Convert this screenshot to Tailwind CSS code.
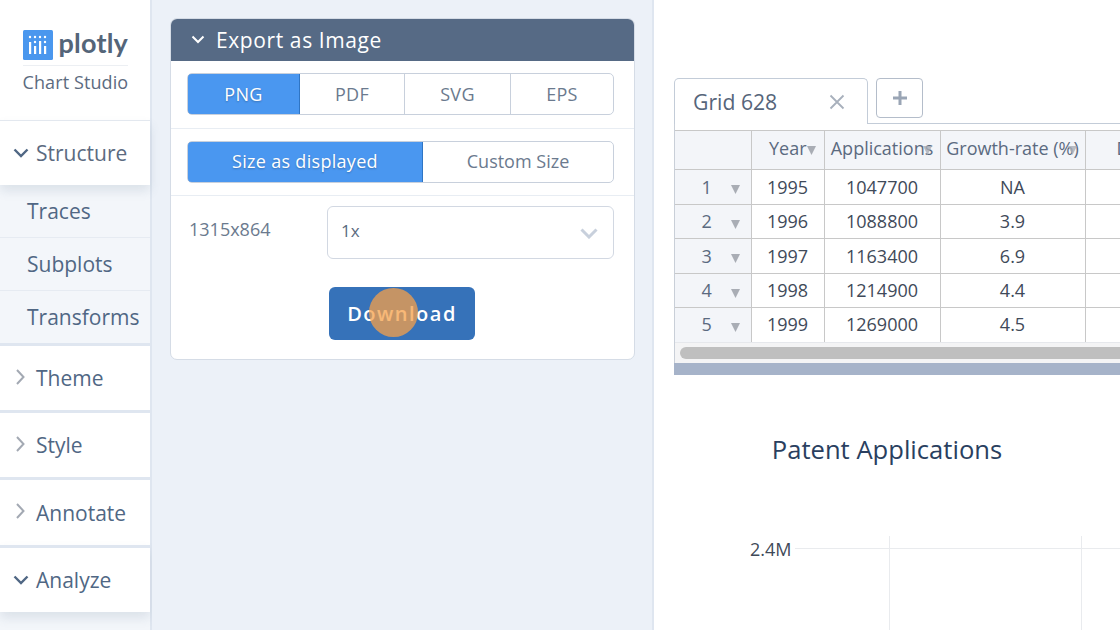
<!DOCTYPE html>
<html lang="en">
<head>
  <meta charset="UTF-8" />
  <title>Chart Studio</title>
  <script src="https://cdn.jsdelivr.net/npm/@tailwindcss/browser@4"></script>
</head>
<body class="bg-white">
  <div class="relative flex w-[1120px] h-[630px] overflow-hidden bg-white text-[#506784] font-['Open_Sans',sans-serif]">

    <!-- sidebar -->
    <aside class="w-[152px] h-full shrink-0 bg-[#f3f6fa] border-r-2 border-[#dfe6f0] flex flex-col">
      <div class="h-[120px] shrink-0 bg-white flex flex-col items-center pt-[30px]">
        <div class="flex items-center gap-[6px] w-[105px] h-[30px]">
          <svg width="30" height="30" viewBox="0 0 30 30" class="shrink-0">
            <rect width="30" height="30" rx="1.5" fill="#4a97ee"/>
            <g fill="#fff">
              <circle cx="7" cy="7" r="1.2"/><circle cx="12" cy="7" r="1.2"/><circle cx="17" cy="7" r="1.2"/><circle cx="22" cy="7" r="1.2"/>
              <circle cx="12" cy="12" r="1.2"/><circle cx="22" cy="12" r="1.2"/>
              <rect x="6" y="12" width="2.2" height="12"/><rect x="11" y="16" width="2.2" height="8"/><rect x="16" y="11" width="2.2" height="13"/><rect x="21" y="16" width="2.2" height="8"/>
            </g>
          </svg>
          <span class="text-[27px] leading-[30px] font-bold text-[#546579] tracking-[0.2px] font-['Lato',sans-serif] -mt-[5px]">plotly</span>
        </div>
        <div class="w-[105px] mt-[5px] border-t border-[#eceff3] pt-[3px] text-[18px] leading-[26px] tracking-[0.1px] text-[#5c6b80] text-center whitespace-nowrap">Chart Studio</div>
      </div>

      <div class="h-[65px] shrink-0 bg-white border-t border-[#e3e8ef] shadow-[0_6px_10px_rgba(80,103,132,0.14)] flex items-center pl-[13px] gap-[7px] relative">
        <svg width="16" height="10" viewBox="0 0 16 10" fill="none" stroke="#506784" stroke-width="2.4"><path d="M1.5 1.5 8 8l6.5-6.5"/></svg>
        <span class="text-[21px] text-[#5b6a80] mt-[2px]">Structure</span>
      </div>
      <div class="h-[53px] shrink-0 border-b border-[#e6ebf2] flex items-center pl-[27px] pt-[2px] text-[21px]">Traces</div>
      <div class="h-[53px] shrink-0 border-b border-[#e6ebf2] flex items-center pl-[27px] pt-[2px] text-[21px]">Subplots</div>
      <div class="h-[52px] shrink-0 flex items-center pl-[27px] pt-[2px] text-[21px]">Transforms</div>

      <div class="h-[67px] shrink-0 bg-white border-t-[3px] border-[#dfe6f0] flex items-center pl-[16px] gap-[11px]">
        <svg width="9" height="16" viewBox="0 0 9 16" fill="none" stroke="#a3a9b3" stroke-width="2" class="-mt-[3px]"><path d="M1 1l6.5 7L1 15"/></svg>
        <span class="text-[21px] mt-[2px]">Theme</span>
      </div>
      <div class="h-[67px] shrink-0 bg-white border-t-[3px] border-[#dfe6f0] flex items-center pl-[16px] gap-[11px]">
        <svg width="9" height="16" viewBox="0 0 9 16" fill="none" stroke="#a3a9b3" stroke-width="2" class="-mt-[3px]"><path d="M1 1l6.5 7L1 15"/></svg>
        <span class="text-[21px] mt-[2px]">Style</span>
      </div>
      <div class="h-[68px] shrink-0 bg-white border-t-[3px] border-[#dfe6f0] flex items-center pl-[16px] gap-[11px]">
        <svg width="9" height="16" viewBox="0 0 9 16" fill="none" stroke="#a3a9b3" stroke-width="2" class="-mt-[3px]"><path d="M1 1l6.5 7L1 15"/></svg>
        <span class="text-[21px] mt-[2px]">Annotate</span>
      </div>
      <div class="h-[67px] shrink-0 bg-white border-t-[3px] border-[#dfe6f0] shadow-[0_6px_10px_rgba(80,103,132,0.14)] flex items-center pl-[13px] gap-[7px]">
        <svg width="16" height="10" viewBox="0 0 16 10" fill="none" stroke="#506784" stroke-width="2.4"><path d="M1.5 1.5 8 8l6.5-6.5"/></svg>
        <span class="text-[21px] mt-[2px]">Analyze</span>
      </div>
    </aside>

    <!-- export panel -->
    <section class="w-[502px] h-full shrink-0 bg-[#ecf1f8] border-r-2 border-[#dfe6f0] pt-[18px] pl-[18px]">
      <div class="w-[465px] h-[342px] bg-white rounded-[7px] border border-[#d5dce6] overflow-hidden">
        <div class="h-[43px] -mt-px -mx-px bg-[#566a85] flex items-center pl-[21px] gap-[11px] text-white">
          <svg width="14" height="9" viewBox="0 0 14 9" fill="none" stroke="#fff" stroke-width="2"><path d="M1.5 1.5 7 7l5.5-5.5"/></svg>
          <span class="text-[21px] tracking-[0.6px] mt-[3px]">Export as Image</span>
        </div>
        <div class="h-[68px] border-b border-[#e8edf3] flex items-start pt-[12px] pl-[16px]">
          <div class="flex h-[42px] w-[427px] rounded-[5px] border border-[#c8d0dc] overflow-hidden text-[18px] text-[#6b7a8e] tracking-[0.3px]">
            <div class="w-[113px] -ml-px bg-[#4a97f0] border border-[#2f75c4] -my-px rounded-l-[5px] text-white flex items-center justify-center [text-shadow:0_1px_2px_rgba(0,0,0,0.25)]">PNG</div>
            <div class="w-[105px] border-r border-[#c8d0dc] flex items-center justify-center">PDF</div>
            <div class="w-[106px] border-r border-[#c8d0dc] flex items-center justify-center">SVG</div>
            <div class="flex-1 flex items-center justify-center">EPS</div>
          </div>
        </div>
        <div class="h-[67px] border-b border-[#e8edf3] flex items-center pl-[16px]">
          <div class="flex h-[42px] w-[427px] rounded-[5px] border border-[#c8d0dc] overflow-hidden text-[18px] text-[#6b7a8e]">
            <div class="w-[236px] -ml-px bg-[#4a97f0] border border-[#2f75c4] -my-px pb-[2px] rounded-l-[5px] text-white flex items-center justify-center tracking-[0.3px] [text-shadow:0_1px_2px_rgba(0,0,0,0.25)]">Size as displayed</div>
            <div class="flex-1 flex items-center justify-center pb-[2px]">Custom Size</div>
          </div>
        </div>
        <div class="flex items-start pt-[10px] pl-[18px]">
          <span class="w-[138px] mt-[11px] text-[18px] leading-[24px] text-[#6b7a8e]">1315x864</span>
          <div class="w-[287px] h-[53px] rounded-[6px] border-[1.5px] border-[#d2d8e2] flex items-center justify-between pl-[13px] pr-[15px] text-[17px] text-[#5b6a80]">
            <span class="-mt-[3px]">1x</span>
            <svg width="18" height="11" viewBox="0 0 18 11" fill="none" stroke="#c8d0dc" stroke-width="3" class="mt-[1px]"><path d="M1.5 1.5 9 9l7.5-7.5"/></svg>
          </div>
        </div>
        <div class="mt-[28px] ml-[158px] w-[146px] h-[53px] rounded-[6px] bg-[#3672b9] text-white flex items-center justify-center text-[20px] font-[550] tracking-[1.5px]">Download</div>
      </div>
    </section>

    <!-- grid and chart -->
    <main class="flex-1 min-w-0 pt-[78px] pl-[20px] overflow-hidden">
      <div class="flex items-start h-[46px] border-b border-[#c3ccd8]">
        <div class="w-[194px] h-[46px] bg-white border border-b-0 border-[#c3ccd8] rounded-t-[5px] flex items-center justify-between pl-[18px] pr-[22px]">
          <span class="text-[21.2px] text-[#56657a]">Grid 628</span>
          <svg width="16" height="16" viewBox="0 0 16 16" stroke="#a8b0bc" stroke-width="1.8"><path d="M1.5 1.5l13 13M14.5 1.5l-13 13"/></svg>
        </div>
        <div class="ml-[8px] w-[47px] h-[40px] rounded-[4px] border border-[#b4bdca] flex items-center justify-center">
          <svg width="16" height="16" viewBox="0 0 16 16" stroke="#9aa5b5" stroke-width="3"><path d="M8 1v14M1 8h14"/></svg>
        </div>
      </div>

      <div class="w-[600px] border-l border-[#c9cfd8] pt-[6px]">
        <table class="border-collapse table-fixed w-[600px] text-center text-[#3f4a59] text-[18px]">
          <colgroup><col class="w-[76px]"><col class="w-[73px]"><col class="w-[116px]"><col class="w-[145px]"><col></colgroup>
          <thead>
            <tr class="h-[39px] bg-[#f3f5f9] text-[#5b6a80]">
              <th class="border-y border-r border-[#c8c8c8] font-normal"></th>
              <th class="border-y border-r border-[#c8c8c8] font-normal relative text-right pr-[17px]"><span class="relative -top-[2px]">Year</span><svg width="9" height="9" viewBox="0 0 9 9" class="absolute right-[8px] top-[15px]"><path d="M0 0h9L4.5 9z" fill="#a9adb5"/></svg></th>
              <th class="border-y border-r border-[#c8c8c8] font-normal relative whitespace-nowrap"><span class="relative -top-[2px]">Applications</span><svg width="9" height="9" viewBox="0 0 9 9" class="absolute right-[8px] top-[15px]"><path d="M0 0h9L4.5 9z" fill="#a9adb5" fill-opacity="0.8"/></svg></th>
              <th class="border-y border-r border-[#c8c8c8] font-normal relative whitespace-nowrap"><span class="relative -top-[2px]">Growth-rate (%)</span><svg width="9" height="9" viewBox="0 0 9 9" class="absolute right-[8px] top-[15px]"><path d="M0 0h9L4.5 9z" fill="#a9adb5" fill-opacity="0.8"/></svg></th>
              <th class="border-y border-[#c8c8c8] font-normal text-left pl-[31px]"><span class="relative -top-[2px] text-[#5b6a80]">D</span></th>
            </tr>
          </thead>
          <tbody>
            <tr class="h-[35px]"><td class="relative bg-[#f3f5f9] border-r border-b border-[#c8c8c8] text-[#5b6a80] pr-[12px]">1<svg width="9" height="9" viewBox="0 0 9 9" class="absolute right-[11px] top-[15px]"><path d="M0 0h9L4.5 9z" fill="#a9adb5"/></svg></td><td class="border-r border-b border-[#c8c8c8]">1995</td><td class="border-r border-b border-[#c8c8c8]">1047700</td><td class="border-r border-b border-[#c8c8c8]">NA</td><td class="border-b border-[#c8c8c8]"></td></tr>
            <tr class="h-[34px]"><td class="relative bg-[#f3f5f9] border-r border-b border-[#c8c8c8] text-[#5b6a80] pr-[12px]">2<svg width="9" height="9" viewBox="0 0 9 9" class="absolute right-[11px] top-[15px]"><path d="M0 0h9L4.5 9z" fill="#a9adb5"/></svg></td><td class="border-r border-b border-[#c8c8c8]">1996</td><td class="border-r border-b border-[#c8c8c8]">1088800</td><td class="border-r border-b border-[#c8c8c8]">3.9</td><td class="border-b border-[#c8c8c8]"></td></tr>
            <tr class="h-[35px]"><td class="relative bg-[#f3f5f9] border-r border-b border-[#c8c8c8] text-[#5b6a80] pr-[12px]">3<svg width="9" height="9" viewBox="0 0 9 9" class="absolute right-[11px] top-[15px]"><path d="M0 0h9L4.5 9z" fill="#a9adb5"/></svg></td><td class="border-r border-b border-[#c8c8c8]">1997</td><td class="border-r border-b border-[#c8c8c8]">1163400</td><td class="border-r border-b border-[#c8c8c8]">6.9</td><td class="border-b border-[#c8c8c8]"></td></tr>
            <tr class="h-[34px]"><td class="relative bg-[#f3f5f9] border-r border-b border-[#c8c8c8] text-[#5b6a80] pr-[12px]">4<svg width="9" height="9" viewBox="0 0 9 9" class="absolute right-[11px] top-[15px]"><path d="M0 0h9L4.5 9z" fill="#a9adb5"/></svg></td><td class="border-r border-b border-[#c8c8c8]">1998</td><td class="border-r border-b border-[#c8c8c8]">1214900</td><td class="border-r border-b border-[#c8c8c8]">4.4</td><td class="border-b border-[#c8c8c8]"></td></tr>
            <tr class="h-[34px]"><td class="relative bg-[#f3f5f9] border-r border-[#c8c8c8] text-[#5b6a80] pr-[12px]">5<svg width="9" height="9" viewBox="0 0 9 9" class="absolute right-[11px] top-[15px]"><path d="M0 0h9L4.5 9z" fill="#a9adb5"/></svg></td><td class="border-r border-[#c8c8c8]">1999</td><td class="border-r border-[#c8c8c8]">1269000</td><td class="border-r border-[#c8c8c8]">4.5</td><td></td></tr>
          </tbody>
        </table>
        <div class="h-[21px] bg-[#f4f4f5] border-t border-[#e6e8ec] pt-[4px] pl-[5px]">
          <div class="h-[12px] rounded-l-full bg-[#bfbfbf]"></div>
        </div>
      </div>
      <div class="h-[12px] w-[600px] bg-[#a6b3c9]"></div>

      <h2 class="w-[426px] mt-[59px] text-center text-[25.6px] leading-[32px] text-[#2a3f5f]">Patent Applications</h2>

      <div class="relative mt-[70px] h-[96px]">
        <span class="absolute left-[76px] top-[1px] text-[18px] leading-[24px] text-[#3f4a59]">2.4M</span>
        <div class="absolute left-[121px] right-0 top-[12px] h-[1px] bg-[#e9ebee]"></div>
        <div class="absolute left-[215px] top-0 bottom-0 w-[1px] bg-[#e9ebee]"></div>
        <div class="absolute left-[407px] top-0 bottom-0 w-[1px] bg-[#e9ebee]"></div>
      </div>
    </main>

    <!-- click marker -->
    <div class="absolute left-[369px] top-[288px] w-[49px] h-[49px] rounded-full bg-[#f5a04a]/75"></div>
  </div>
</body>
</html>
